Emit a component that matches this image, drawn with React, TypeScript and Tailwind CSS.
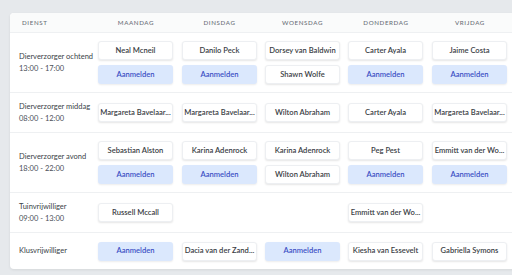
import React from "react";

type Slot = { name?: string; signup?: boolean } | null;

const days = ["Maandag", "Dinsdag", "Woensdag", "Donderdag", "Vrijdag"];

const rows: { title: string; time?: string; cells: Slot[][] }[] = [
  {
    title: "Dierverzorger ochtend",
    time: "13:00 - 17:00",
    cells: [
      [{ name: "Neal Mcneil" }, { signup: true }],
      [{ name: "Danilo Peck" }, { signup: true }],
      [{ name: "Dorsey van Baldwin" }, { name: "Shawn Wolfe" }],
      [{ name: "Carter Ayala" }, { signup: true }],
      [{ name: "Jaime Costa" }, { signup: true }],
    ],
  },
  {
    title: "Dierverzorger middag",
    time: "08:00 - 12:00",
    cells: [
      [{ name: "Margareta Bavelaar..." }],
      [{ name: "Margareta Bavelaar..." }],
      [{ name: "Wilton Abraham" }],
      [{ name: "Carter Ayala" }],
      [{ name: "Margareta Bavelaar..." }],
    ],
  },
  {
    title: "Dierverzorger avond",
    time: "18:00 - 22:00",
    cells: [
      [{ name: "Sebastian Alston" }, { signup: true }],
      [{ name: "Karina Adenrock" }, { signup: true }],
      [{ name: "Karina Adenrock" }, { name: "Wilton Abraham" }],
      [{ name: "Peg Pest" }, { signup: true }],
      [{ name: "Emmitt van der Wo..." }, { signup: true }],
    ],
  },
  {
    title: "Tuinvrijwilliger",
    time: "09:00 - 13:00",
    cells: [[{ name: "Russell Mccall" }], [], [], [{ name: "Emmitt van der Wo..." }], []],
  },
  {
    title: "Klusvrijwilliger",
    cells: [
      [{ signup: true }],
      [{ name: "Dacia van der Zand..." }],
      [{ signup: true }],
      [{ name: "Kiesha van Essevelt" }],
      [{ name: "Gabriella Symons" }],
    ],
  },
];

function SlotButton({ slot }: { slot: Slot }) {
  if (!slot) return null;
  if (slot.signup) {
    return (
      <div className="flex h-[19px] w-[75px] items-center justify-center rounded-[3px] bg-[#dbe8fd] text-[7.6px] font-semibold text-[#3b4fc4] shadow-[0_1px_2px_rgba(0,0,0,0.08)]">
        Aanmelden
      </div>
    );
  }
  return (
    <div className="flex h-[19px] w-[75px] items-center justify-center overflow-hidden rounded-[3px] border border-[#edeff2] bg-white text-[7.6px] font-semibold whitespace-nowrap text-[#3a3e45] shadow-[0_1px_2px_rgba(0,0,0,0.1)]">
      {slot.name}
    </div>
  );
}

export default function App() {
  const cols = "grid-cols-[84px_84px_83px_83px_84px_84px]";
  return (
    <div
      className="h-[275px] w-[512px] overflow-hidden bg-[#e6e9ec] pt-[13px] pl-[10px]"
      style={{ fontFamily: 'Lato, "Noto Sans", sans-serif' }}
    >
      <div className="w-[520px] overflow-hidden rounded-[4px] bg-white shadow-[0_1px_3px_rgba(0,0,0,0.08)]">
        {/* Header */}
        <div className={`grid ${cols} h-[20px] items-center border-b border-[#eef0f2] bg-[#fafbfb] pt-px text-[6.2px] font-medium tracking-[0.1em] text-[#6b7078] uppercase`}>
          <div className="pl-[12px]">Dienst</div>
          {days.map((d) => (
            <div key={d} className="text-center">
              {d}
            </div>
          ))}
        </div>

        {rows.map((row, i) => (
          <div
            key={row.title}
            className={`grid ${cols} items-center ${i < rows.length - 1 ? "border-b border-[#eef0f2]" : ""} ${
              row.cells.some((c) => c.length > 1) ? "h-[60px]" : i === rows.length - 1 ? "h-[36px]" : "h-[40px]"
            }`}
          >
            <div className="pl-[9px] text-[7.5px] leading-[11.5px] whitespace-nowrap text-[#3a3f47]">
              <div>{row.title}</div>
              {row.time && <div className="text-[#4b5058]">{row.time}</div>}
            </div>
            {row.cells.map((cell, j) => (
              <div key={j} className="flex flex-col gap-[5px] pl-[4px]">
                {cell.map((s, k) => (
                  <SlotButton key={k} slot={s} />
                ))}
              </div>
            ))}
          </div>
        ))}
      </div>
    </div>
  );
}
